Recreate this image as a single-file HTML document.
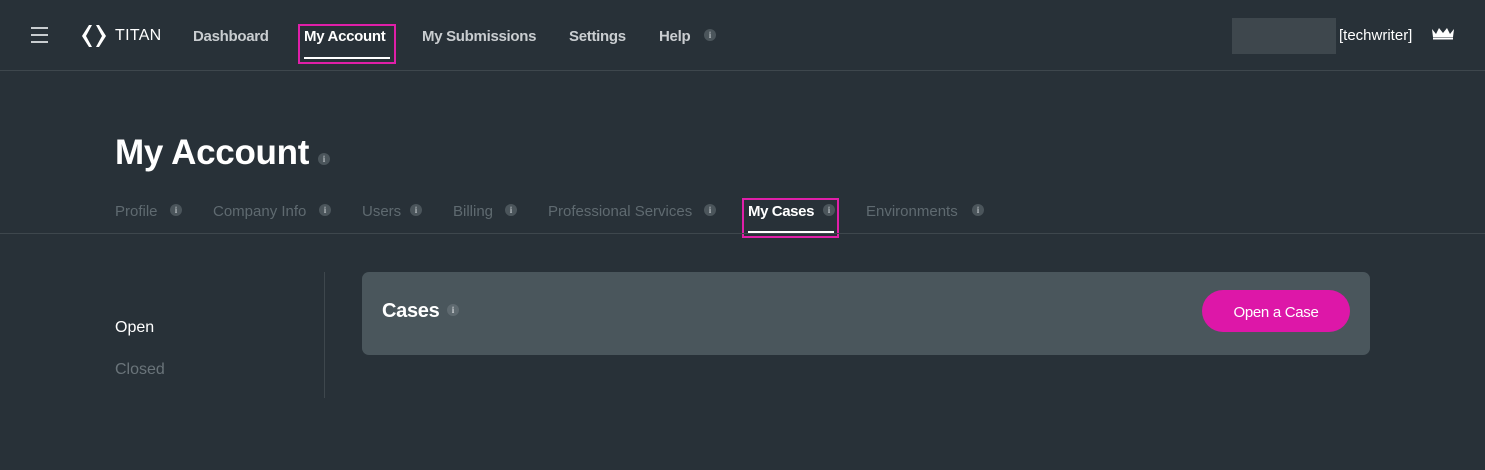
<!DOCTYPE html>
<html><head><style>
*{margin:0;padding:0;box-sizing:border-box}
body{width:1485px;height:470px;background:#283138;font-family:"Liberation Sans",sans-serif;position:relative;overflow:hidden;color:#fff}
.a{position:absolute;white-space:nowrap}
.i{display:inline-block;width:12px;height:12px;border-radius:50%;background:#4b555b;color:#aeb5b9;font:bold 9px "Liberation Serif",serif;text-align:center;line-height:12px;vertical-align:middle}
.nav{top:28px;font-size:15px;font-weight:bold;color:#c9cdd0;letter-spacing:-0.3px}
.tab{top:203px;font-size:15px;color:#5f6a70}
</style></head><body>
<div class="a" style="left:0;top:70px;width:1485px;height:1px;background:#3e474d"></div>
<div class="a" style="left:31px;top:27px;width:17px;height:2px;background:#c9cdd0;box-shadow:0 7px 0 #c9cdd0,0 14px 0 #c9cdd0"></div>
<svg class="a" style="left:81px;top:24px" width="26" height="24" viewBox="0 0 26 24"><path d="M8 1 L1 12 L8 23 L11 23 L5 12 L11 1Z M18 1 L25 12 L18 23 L15 23 L21 12 L15 1Z" fill="#fff"/></svg>
<div class="a" style="left:115px;top:27px;font-size:16px;color:#fff;letter-spacing:0.3px">TITAN</div>
<div class="a nav" style="left:193px">Dashboard</div>
<div class="a nav" style="left:304px;color:#fff">My Account</div>
<div class="a" style="left:298px;top:24px;width:98px;height:40px;border:2px solid #e01fa9"></div>
<div class="a" style="left:304px;top:57px;width:86px;height:2px;background:#fff"></div>
<div class="a nav" style="left:422px">My Submissions</div>
<div class="a nav" style="left:569px">Settings</div>
<div class="a nav" style="left:659px">Help</div>
<span class="a i" style="left:704px;top:29px">i</span>
<div class="a" style="left:1232px;top:18px;width:104px;height:36px;background:#3e474d"></div>
<div class="a" style="left:1339px;top:27px;font-size:15px;color:#fff">[techwriter]</div>
<svg class="a" style="left:1431px;top:27px" width="24" height="13" viewBox="0 0 24 13"><path d="M1 2 L5 7 L8 1 L12 6 L16 1 L19 7 L23 2 L22 10 L2 10Z" fill="#fff"/><rect x="2" y="10.5" width="20" height="2" fill="#fff"/></svg>
<div class="a" style="left:115px;top:133px;font-size:35px;font-weight:bold;color:#fff;letter-spacing:-0.3px">My Account</div>
<span class="a i" style="left:318px;top:153px">i</span>
<div class="a tab" style="left:115px">Profile</div><span class="a i" style="left:170px;top:204px">i</span>
<div class="a tab" style="left:213px">Company Info</div><span class="a i" style="left:319px;top:204px">i</span>
<div class="a tab" style="left:362px">Users</div><span class="a i" style="left:410px;top:204px">i</span>
<div class="a tab" style="left:453px">Billing</div><span class="a i" style="left:505px;top:204px">i</span>
<div class="a tab" style="left:548px">Professional Services</div><span class="a i" style="left:704px;top:204px">i</span>
<div class="a tab" style="left:748px;color:#fff;font-weight:bold;letter-spacing:-0.4px">My Cases</div><span class="a i" style="left:823px;top:204px">i</span>
<div class="a" style="left:742px;top:198px;width:97px;height:40px;border:2px solid #e01fa9"></div>
<div class="a" style="left:748px;top:231px;width:86px;height:2px;background:#fff"></div>
<div class="a tab" style="left:866px">Environments</div><span class="a i" style="left:972px;top:204px">i</span>
<div class="a" style="left:0;top:233px;width:1485px;height:1px;background:#3e474d"></div>
<div class="a" style="left:115px;top:319px;font-size:16px;color:#fff">Open</div>
<div class="a" style="left:115px;top:361px;font-size:16px;color:#6a747a">Closed</div>
<div class="a" style="left:324px;top:272px;width:1px;height:126px;background:#3e474d"></div>
<div class="a" style="left:362px;top:272px;width:1008px;height:83px;background:#4a565c;border-radius:7px"></div>
<div class="a" style="left:382px;top:300px;font-size:20px;font-weight:bold;color:#fff;letter-spacing:-0.3px">Cases</div>
<span class="a i" style="left:447px;top:304px;background:#5f6a70;color:#c9cdd0">i</span>
<div class="a" style="left:1202px;top:290px;width:148px;height:42px;background:#dd17a8;border-radius:21px;color:#fff;font-size:15px;text-align:center;line-height:45px;letter-spacing:-0.3px">Open a Case</div>
</body></html>
